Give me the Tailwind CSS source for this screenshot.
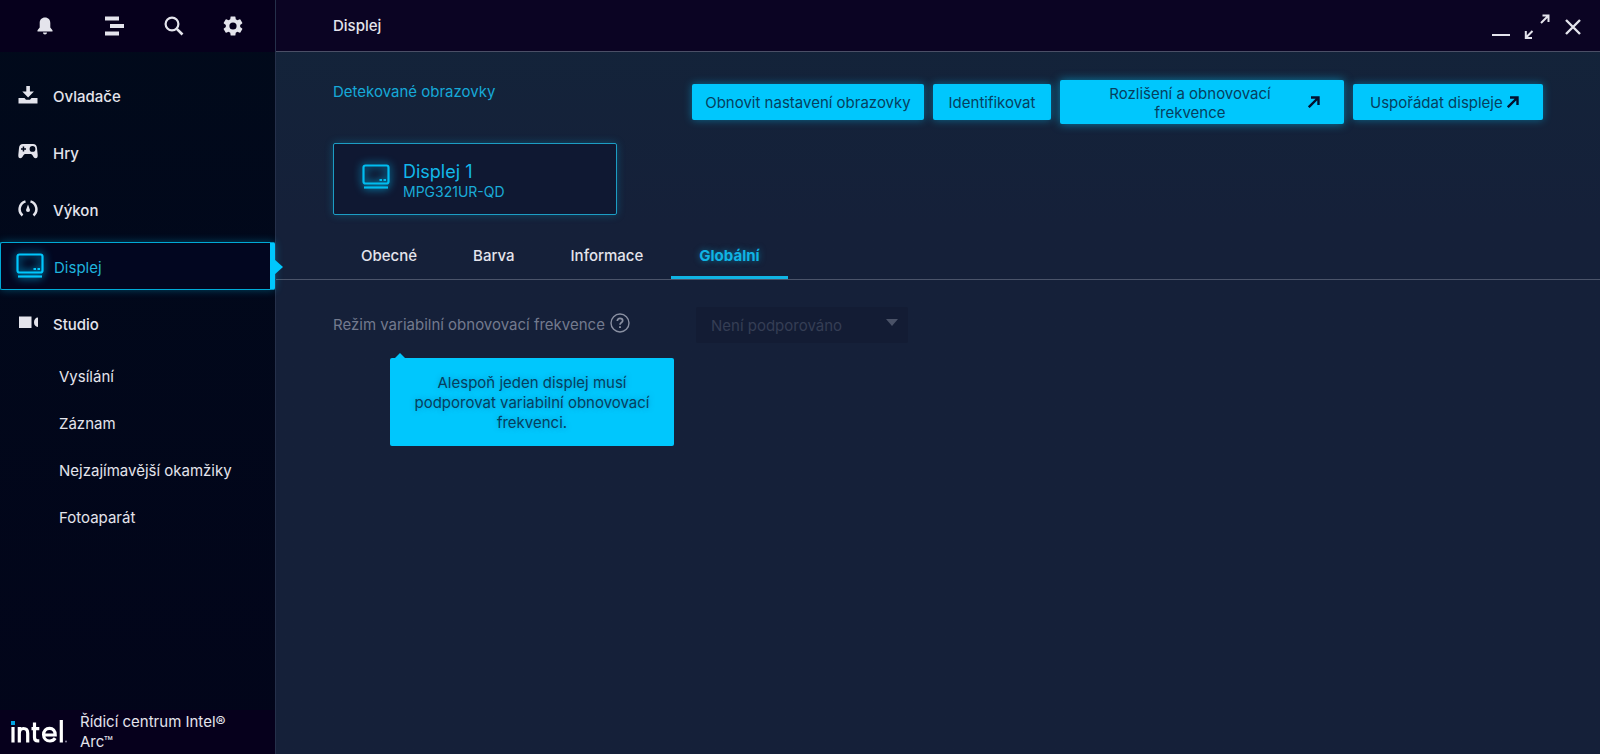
<!DOCTYPE html>
<html lang="cs">
<head>
<meta charset="utf-8">
<meta name="viewport" content="width=device-width, initial-scale=1">
<title>Řídicí centrum Intel® Arc™</title>
<script src="https://cdn.jsdelivr.net/npm/@tailwindcss/browser@4"></script>
</head>
<body class="flex min-h-screen bg-[#152039] font-['Inter',sans-serif] text-[15px] leading-5 text-[#e4e4ec]">

<svg class="hidden" aria-hidden="true">
  <symbol id="monitor" viewBox="0 0 28 26">
    <rect x="1.500" y="1.500" width="25" height="18" rx="2" fill="none" stroke="currentColor" stroke-width="2.200"/>
    <path d="M2 23.500h24" stroke="currentColor" stroke-width="2.200"/>
    <path d="M17.500 16h2.500M21.500 16h2.500" stroke="currentColor" stroke-width="2"/>
  </symbol>
  <symbol id="external" viewBox="0 0 12 12">
    <path d="M.8 11.200L10 2M3 1.500h7.500V9" fill="none" stroke="currentColor" stroke-width="2.400"/>
  </symbol>
</svg>

<aside class="flex w-[276px] shrink-0 flex-col border-r border-[#25304a] bg-linear-to-b from-[#010a1b] to-[#02051a]">
  <div class="flex h-[52px] items-center bg-[#06001c] pl-[36px]">
    <button type="button" aria-label="Oznámení"><svg class="h-5 w-[18px]" viewBox="0 0 18 20" fill="currentColor"><path d="M9 1.500c3.300 0 5.300 2.300 5.300 5.500v4.500l2.200 2.800v1.200h-15v-1.200l2.200-2.800V7c0-3.200 2-5.500 5.300-5.500zM7 16.500h4c0 1.200-.8 2-2 2s-2-.8-2-2z"/></svg></button>
    <button type="button" aria-label="Nabídka" class="ml-[50px]"><svg class="size-5" viewBox="0 0 20 20" stroke="currentColor" stroke-width="4"><path d="M1 2.500h14M6 10h14M1 17.500h14"/></svg></button>
    <button type="button" aria-label="Hledat" class="ml-10"><svg class="size-5" viewBox="0 0 20 20" fill="none" stroke="currentColor"><circle cx="8" cy="8" r="6.400" stroke-width="2.200"/><path d="M12.800 12.800l5.700 5.700" stroke-width="2.600"/></svg></button>
    <button type="button" aria-label="Nastavení" class="ml-[38px]"><svg class="size-[22px]" viewBox="1 1 22 22" fill="currentColor"><path d="M19.140 12.940c.04-.3.060-.61.060-.94 0-.32-.02-.64-.07-.94l2.030-1.580a.49.49 0 0 0 .12-.61l-1.920-3.320a.49.49 0 0 0-.59-.22l-2.390.96c-.5-.38-1.030-.7-1.620-.94l-.36-2.540a.48.48 0 0 0-.48-.41h-3.840c-.24 0-.43.17-.47.41l-.36 2.540c-.59.24-1.130.57-1.620.94l-2.390-.96a.48.48 0 0 0-.59.22L2.740 8.870c-.12.21-.08.47.12.61l2.030 1.580c-.05.3-.09.63-.09.940s.02.64.07.940l-2.030 1.580a.49.49 0 0 0-.12.61l1.920 3.320c.12.22.37.29.59.22l2.390-.96c.5.38 1.030.7 1.620.94l.36 2.540c.05.24.24.41.48.41h3.840c.24 0 .44-.17.47-.41l.36-2.540c.59-.24 1.130-.56 1.620-.94l2.390.96c.22.08.47 0 .59-.22l1.920-3.320a.48.48 0 0 0-.12-.61zM12 15.600A3.600 3.600 0 1 1 12 8.400a3.600 3.600 0 0 1 0 7.200z"/></svg></button>
  </div>

  <nav class="flex flex-col gap-[9px] pt-[19px] font-medium">
    <a href="#" class="flex h-12 items-center gap-[15px] pl-[18px]"><svg class="size-5" viewBox="0 0 20 20" fill="currentColor"><path d="M8.300 1h3.600v5.500h4L10.100 12.500 4.300 6.500h4zM.5 13h6l1.500 1.700h4L13.500 13h6v5.500H.5z"/></svg><span class="pt-1">Ovladače</span></a>
    <a href="#" class="flex h-12 items-center gap-[15px] pl-[18px]"><svg class="size-5" viewBox="0 0 20 20" fill="currentColor" fill-rule="evenodd"><path d="M5 2h10c2.500 0 3.700 1.500 4 4l.7 7c.2 2-.6 3.300-2 3.300-2.200 0-3.200-4.300-4.700-4.300H7c-1.500 0-2.500 4.300-4.700 4.300-1.400 0-2.200-1.300-2-3.300L1 6c.3-2.500 1.500-4 4-4zM4.700 4.500v1.800H3v1.400h1.700v1.800h1.500V7.700H8V6.300H6.200V4.500zM14.500 4a2.900 2.900 0 1 0 0 5.800 2.900 2.900 0 0 0 0-5.800z"/></svg><span class="pt-1">Hry</span></a>
    <a href="#" class="flex h-12 items-center gap-[15px] pl-[18px]"><svg class="size-5" viewBox="0 0 20 20"><path d="M7.500 2.400A8.200 8.200 0 0 0 4.500 16.500M12.500 2.400a8.200 8.200 0 0 1 3 14.100" fill="none" stroke="currentColor" stroke-width="2.500"/><path d="M10 5.500l2 5.500a2 2 0 1 1-4 0z" fill="currentColor"/></svg><span class="pt-1">Výkon</span></a>
    <a href="#" aria-current="page" class="relative flex h-12 items-center gap-[10px] rounded-xs border border-r-[5px] border-[#00a9d6] border-r-[#00c7fd] bg-[#020620] pl-[15px] font-normal text-[#1fb3dd] shadow-[0_0_8px_#00c7fd55]"><svg class="h-[26px] w-7 text-[#00c7fd] drop-shadow-[0_0_4px_#00c7fd]"><use href="#monitor"/></svg><span class="pt-1">Displej</span>
      <svg class="absolute top-4 -right-[14px] h-4 w-[10px]" viewBox="0 0 10 16"><path d="M0 0l9 8-9 8z" fill="#00c7fd"/></svg></a>
    <a href="#" class="flex h-12 items-center gap-[15px] pl-[18px]"><svg class="size-5" viewBox="0 0 20 20" fill="currentColor"><path d="M1 3.500h12.500V15H1zM20 4.500v9.500c-2.500 0-4-2-4-4.700s1.500-4.800 4-4.800z"/></svg><span class="pt-1">Studio</span></a>
  </nav>
  <nav class="flex flex-col gap-[27px] pt-5 pl-[59px]" aria-label="Studio">
    <a href="#">Vysílání</a>
    <a href="#">Záznam</a>
    <a href="#">Nejzajímavější okamžiky</a>
    <a href="#">Fotoaparát</a>
  </nav>

  <footer class="mt-auto flex h-11 items-center gap-3 bg-[#06001c] pl-[11px]">
    <svg class="h-6 w-[57px] shrink-0" viewBox="0 0 57 24" role="img" aria-label="Intel">
      <path d="M0 1h4v4H0z" fill="#00a3e0"/>
      <g fill="none" stroke="#fff" stroke-width="3.200">
        <path d="M2 7v15.500M8.300 22.500V7M8.300 13.500c0-3 1.500-5 4.200-5s4.200 1.600 4.200 4.800v9.200M23.500 2.500v15c0 2.300 1 3.400 3.200 3.400h1.600M20.500 8.600h7.800M44.200 18.200c-1.200 1.900-3 2.800-5.300 2.800-3.700 0-6.300-2.600-6.300-6.300s2.400-6.300 5.900-6.300 5.700 2.500 5.700 6.600H33M50.300 0v22.500"/>
      </g>
      <circle cx="55" cy="21.500" r="1" fill="#8c88a0"/>
    </svg>
    <p class="max-w-40">Řídicí centrum Intel® Arc™</p>
  </footer>
</aside>

<div class="flex min-w-0 flex-1 flex-col bg-linear-to-b from-[#13243a] to-[#152039] to-30%">
  <header class="flex h-[52px] items-center border-b border-[#4b4f66] bg-[#0b0423] pr-[18px] pl-[57px]">
    <h1 class="flex-1 pt-px font-medium">Displej</h1>
    <button type="button" aria-label="Minimalizovat"><svg class="h-6 w-5" viewBox="0 0 20 24"><path d="M1 21h18" stroke="currentColor" stroke-width="2"/></svg></button>
    <button type="button" aria-label="Maximalizovat" class="ml-[13px]"><svg class="h-7 w-[26px]" viewBox="0 0 26 28" fill="none" stroke="currentColor" stroke-width="2"><path d="M17 11L24 4M18.500 3.500H24.500V10M8.500 19L2 25.500M1.800 19v7H8"/></svg></button>
    <button type="button" aria-label="Zavřít" class="ml-[14px]"><svg class="h-5 w-[18px]" viewBox="0 0 18 20"><path d="M2 4l14 14M16 4L2 18" stroke="currentColor" stroke-width="2.400"/></svg></button>
  </header>

  <main>
    <div class="flex items-start justify-between pt-7 pr-[57px] pl-[57px]">
      <h2 class="pt-[2px] text-[#16a9d8]">Detekované obrazovky</h2>
      <div class="flex items-center gap-[9px] text-[#06405f]">
        <button type="button" class="h-9 w-[232px] rounded-xs bg-[#00c7fd] pt-[2px] shadow-[0_0_8px_#00c7fd70]">Obnovit nastavení obrazovky</button>
        <button type="button" class="h-9 w-[118px] rounded-xs bg-[#00c7fd] pt-[2px] shadow-[0_0_8px_#00c7fd70]">Identifikovat</button>
        <button type="button" class="flex h-11 w-[284px] items-center rounded-xs bg-[#00c7fd] pr-6 pl-[40px] shadow-[0_0_10px_#00c7fd90]"><span class="flex-1 pt-[2px] leading-[19px]">Rozlišení a obnovovací frekvence</span><svg class="ml-7 size-3 text-[#02102e]"><use href="#external"/></svg></button>
        <button type="button" class="flex h-9 w-[190px] items-center gap-1 rounded-xs bg-[#00c7fd] pl-[17px] shadow-[0_0_8px_#00c7fd70]"><span class="pt-[2px]">Uspořádat displeje</span><svg class="size-3 text-[#02102e]"><use href="#external"/></svg></button>
      </div>
    </div>

    <button type="button" class="mt-[19px] ml-[57px] flex h-[72px] w-[284px] items-center gap-[13px] rounded-xs border border-[#1c9dc4] bg-[#0f1832] pl-7 text-left text-[#1aabd8] shadow-[0_0_8px_#00c7fd40]">
      <svg class="mb-1 h-[26px] w-7 text-[#00bdf0] drop-shadow-[0_0_4px_#00c7fd]"><use href="#monitor"/></svg>
      <span class="flex flex-col pt-[6px]"><span class="text-lg leading-5 text-[#12b8ea]">Displej 1</span><span class="text-sm leading-5">MPG321UR-QD</span></span>
    </button>

    <div role="tablist" class="mt-[18px] flex h-[47px] border-b border-[#4b546a] pl-[57px] font-medium">
      <button role="tab" type="button" class="px-7">Obecné</button>
      <button role="tab" type="button" class="px-7">Barva</button>
      <button role="tab" type="button" class="px-7">Informace</button>
      <button role="tab" type="button" aria-selected="true" class="border-b-[3px] border-[#10b4e4] px-7 pt-[3px] font-bold text-[#10b4e4] [text-shadow:0_0_6px_#00c7fd80]">Globální</button>
    </div>

    <div class="relative flex items-center pt-[27px] pl-[57px]">
      <div class="flex w-[363px] items-center gap-[5px]">
        <label for="vrr" class="text-[#737a8e]">Režim variabilní obnovovací frekvence</label>
        <button type="button" aria-label="Nápověda" aria-describedby="tip" class="mb-1 text-[#8a90a2]"><svg class="size-5" viewBox="0 0 20 20" fill="none" stroke="currentColor"><circle cx="10" cy="10" r="9" stroke-width="1.400"/><path d="M7.300 8c0-1.700 1.100-2.700 2.700-2.700s2.700 1 2.700 2.400c0 1.800-2.700 1.900-2.700 4" stroke-width="1.700"/><path d="M10 13.300v1.800" stroke-width="1.900"/></svg></button>
      </div>
      <div class="relative">
        <select id="vrr" disabled class="h-9 w-[212px] appearance-none rounded-xs bg-[#131c34] pt-[2px] pl-[15px] text-[#353e54] opacity-100"><option>Není podporováno</option></select>
        <svg class="pointer-events-none absolute top-3 right-[10px] h-[7px] w-3" viewBox="0 0 12 7"><path d="M0 0h12L6 7z" fill="#4a5267"/></svg>
      </div>
      <div id="tip" role="tooltip" class="absolute top-[78px] left-[114px] w-[284px] rounded-xs bg-[#00c7fd] px-5 pt-[15px] pb-[13px] text-center text-[#06405f] [text-shadow:0_0_5px_#0070a080]">
        <svg class="absolute -top-[5px] left-1 h-[6px] w-3" viewBox="0 0 12 6"><path d="M0 6L6 0l6 6z" fill="#00c7fd"/></svg>
        Alespoň jeden displej musí podporovat variabilní obnovovací frekvenci.
      </div>
    </div>
  </main>
</div>
</body>
</html>
